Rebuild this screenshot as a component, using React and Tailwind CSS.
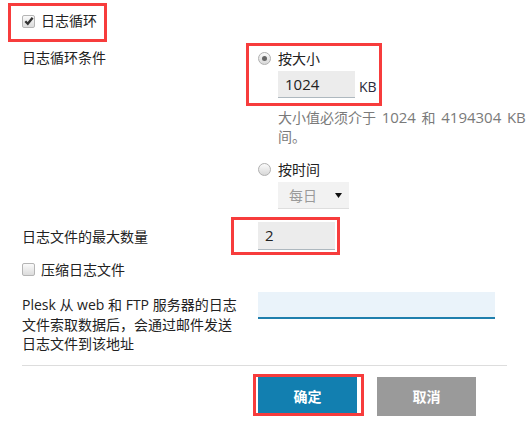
import React from "react";

function Checkbox({ checked }) {
  return (
    <span className="inline-flex w-[13px] h-[13px] shrink-0 items-center justify-center rounded-[2px] border border-[#b5b5b5] bg-gradient-to-b from-[#fafafa] to-[#dcdcdc]">
      {checked && (
        <svg width="10" height="10" viewBox="0 0 10 10">
          <path d="M1.3 5.2 L3.8 7.8 L8.6 1.8" fill="none" stroke="#333" strokeWidth="2.3" />
        </svg>
      )}
    </span>
  );
}

function Radio({ checked }) {
  return (
    <span className="inline-flex w-[13px] h-[13px] shrink-0 items-center justify-center rounded-full border border-[#b0b0b0] bg-gradient-to-b from-[#fbfbfb] to-[#d8d8d8]">
      {checked && <span className="w-[5px] h-[5px] rounded-full bg-[#666]" />}
    </span>
  );
}

export default function App() {
  return (
    <div
      className="relative w-[527px] h-[421px] overflow-hidden bg-white text-[14px] text-[#222]"
      style={{ fontFamily: '"Open Sans", "Noto Sans CJK SC", sans-serif' }}
    >
      {/* row 1 */}
      <div className="h-[42px] flex items-center pl-[22px] gap-[6px] leading-[20px]">
        <Checkbox checked />
        <span>日志循环</span>
      </div>

      {/* row 2 */}
      <div className="flex">
        <div className="w-[258px] shrink-0 pl-[22px] pt-[6px] leading-[20px]">日志循环条件</div>
        <div className="flex flex-col pt-[6px]">
          <div className="h-[20px] flex items-center gap-[7px]">
            <Radio checked />
            <span>按大小</span>
          </div>
          <div className="mt-[3px] ml-[20px] flex items-center gap-[4px]">
            <div className="w-[77px] h-[27px] bg-[#ececec] border-b border-[#aeb8bf] pl-[7px] flex items-center text-[15px]">1024</div>
            <span className="text-[#2a2a3a] mt-[4px]">KB</span>
          </div>
          <div className="mt-[10px] ml-[20px] leading-[19px] text-[#7a7a7a] whitespace-nowrap [word-spacing:2px]">
            大小值必须介于 <span className="text-[15px]">1024</span> 和 <span className="text-[15px]">4194304</span> <span className="text-[15px]">KB</span> 之
            <br />
            间。
          </div>
          <div className="mt-[13px] h-[20px] flex items-center gap-[7px]">
            <Radio />
            <span>按时间</span>
          </div>
          <div className="mt-[3px] ml-[20px] w-[71px] h-[27px] bg-[#f2f2f2] border-b border-[#dedede] flex items-center justify-between pl-[11px] pr-[7px] text-[#9a9a9a]">
            <span>每日</span>
            <svg width="7" height="5" viewBox="0 0 7 5">
              <polygon points="0,0 7,0 3.5,5" fill="#111" />
            </svg>
          </div>
        </div>
      </div>

      {/* row 3 */}
      <div className="mt-[13px] flex items-center h-[28px]">
        <div className="w-[258px] shrink-0 pl-[22px] leading-[20px] mt-[2px]">日志文件的最大数量</div>
        <div className="w-[77px] h-[28px] bg-[#ececec] border-b border-[#aeb8bf] pl-[7px] flex items-center text-[15px]">2</div>
      </div>

      {/* row 4 */}
      <div className="mt-[9px] h-[20px] flex items-center pl-[22px] gap-[6px]">
        <Checkbox />
        <span>压缩日志文件</span>
      </div>

      {/* row 5 */}
      <div className="mt-[13px] flex items-start">
        <div className="w-[258px] shrink-0 pl-[22px] pt-[3px] leading-[19.5px] whitespace-nowrap">
          Plesk 从 web 和 FTP 服务器的日志
          <br />
          文件索取数据后，会通过邮件发送
          <br />
          日志文件到该地址
        </div>
        <div className="w-[237px] h-[27px] bg-[#eaf3fa] border-b-2 border-[#1f7fad]" />
      </div>

      {/* separator */}
      <div className="mt-[11px] mx-[22px] w-[485px] h-px bg-[#dddddd]" />

      {/* buttons */}
      <div className="mt-[11px] pl-[258px] flex gap-[20px]">
        <button className="w-[99px] h-[39px] bg-[#127fb0] text-white font-bold flex items-center justify-center">确定</button>
        <button className="w-[99px] h-[39px] bg-[#9a9a9a] text-white font-bold flex items-center justify-center">取消</button>
      </div>

      {/* annotation boxes */}
      <div className="absolute left-[8px] top-[3px] w-[99px] h-[39px] border-[3px] border-[#f73c3c] pointer-events-none" />
      <div className="absolute left-[246px] top-[43px] w-[136px] h-[63px] border-[3px] border-[#f73c3c] pointer-events-none" />
      <div className="absolute left-[231px] top-[217px] w-[109px] h-[38px] border-[3px] border-[#f73c3c] pointer-events-none" />
      <div className="absolute left-[253px] top-[374px] w-[111px] h-[42px] border-[3px] border-[#f73c3c] pointer-events-none" />
    </div>
  );
}
